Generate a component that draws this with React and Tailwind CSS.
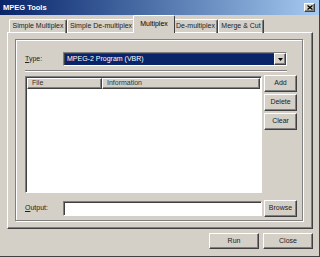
import React from 'react';

const raised =
  'border border-t-white border-l-white border-r-[#404040] border-b-[#404040] shadow-[inset_-1px_-1px_0_#808080] bg-[#d4d0c8]';
const sunken =
  'border border-t-[#808080] border-l-[#808080] border-r-white border-b-white shadow-[inset_1px_1px_0_#404040]';

function Btn({ children, className = '' }) {
  return (
    <div className={`${raised} flex items-center justify-center text-[7px] text-[#222] ${className}`}>
      {children}
    </div>
  );
}

const tabs = [
  { label: 'Simple Multiplex', w: 'w-[58px]' },
  { label: 'Simple De-multiplex', w: 'w-[68px]' },
  { label: 'Multiplex', w: 'w-[42px]', active: true },
  { label: 'De-multiplex', w: 'w-[45px]' },
  { label: 'Merge & Cut', w: 'w-[46px]' },
];

export default function App() {
  return (
    <div
      className="w-[320px] h-[257px] bg-[#d4d0c8] border-r border-b border-r-[#404040] border-b-[#404040] flex flex-col overflow-hidden text-black"
      style={{ fontFamily: '"Liberation Sans", Arial, sans-serif' }}
    >
      {/* title bar */}
      <div className="h-[15px] flex items-center justify-between px-[3px] bg-gradient-to-r from-[#0a246a] to-[#a6caf0]">
        <span className="text-white font-bold text-[7.5px] leading-none">MPEG Tools</span>
        <div className={`${raised} w-[11px] h-[9px] flex items-center justify-center mr-[1px]`}>
          <svg width="6" height="5" viewBox="0 0 6 5">
            <path d="M0.5 0.5 L5.5 4.5 M5.5 0.5 L0.5 4.5" stroke="#000" strokeWidth="1.3" />
          </svg>
        </div>
      </div>

      {/* tabs */}
      <div className="flex items-end h-[18px] pl-[9px] relative z-10 -mb-[1px]">
        {tabs.map((t) =>
          t.active ? (
            <div
              key={t.label}
              className={`${t.w} -mx-[2px] h-[18px] bg-[#d4d0c8] border-t border-l border-r border-t-white border-l-white border-r-[#404040] rounded-t-[2px] flex items-start justify-center pt-[3px] text-[7px] relative z-10`}
            >
              {t.label}
            </div>
          ) : (
            <div
              key={t.label}
              className={`${t.w} h-[14px] border-t border-l border-r border-t-white border-l-white border-r-[#404040] shadow-[inset_-1px_0_0_#808080] rounded-t-[2px] flex items-center justify-center text-[7px] text-[#222]`}
            >
              {t.label}
            </div>
          )
        )}
      </div>

      {/* tab panel */}
      <div className={`${raised} ml-[7px] w-[306px] h-[197px] pt-[6px] pl-[7px]`}>
        <div className="w-[288px] h-[182px] border border-[#808080] shadow-[inset_1px_1px_0_#fff,1px_1px_0_#fff] pl-[9px] pt-[12px] flex flex-col">
          {/* type row */}
          <div className="flex items-center h-[14px]">
            <span className="w-[38px] text-[7px] text-[#222]">
              <span className="underline">T</span>ype:
            </span>
            <div className={`${sunken} w-[224px] h-[14px] bg-[#0a246a] flex items-center justify-between`}>
              <span className="text-white text-[7px] pl-[3px]">MPEG-2 Program (VBR)</span>
              <div className={`${raised} w-[12px] h-full flex items-center justify-center`}>
                <svg width="5" height="3" viewBox="0 0 5 3">
                  <path d="M0 0 H5 L2.5 3 Z" fill="#000" />
                </svg>
              </div>
            </div>
          </div>

          {/* separator */}
          <div className="w-[262px] h-[2px] mt-[4px] border-t border-t-[#808080] border-b border-b-white" />

          {/* list + buttons */}
          <div className="flex mt-[4px] gap-[2px]">
            <div className={`${sunken} w-[237px] h-[117px] bg-white flex flex-col p-[1px]`}>
              <div className="flex h-[11px] text-[7px] text-[#333]">
                <div className={`${raised} w-[75px] h-full flex items-center pl-[4px]`}>File</div>
                <div className={`${raised} flex-1 h-full flex items-center pl-[4px]`}>Information</div>
              </div>
            </div>
            <div className="flex flex-col gap-[2px] -mt-[1px]">
              <Btn className="w-[33px] h-[17px]">Add</Btn>
              <Btn className="w-[33px] h-[17px]">Delete</Btn>
              <Btn className="w-[33px] h-[17px]">Clear</Btn>
            </div>
          </div>

          {/* output row */}
          <div className="flex items-center mt-[7px] gap-[2px]">
            <span className="w-[36px] text-[7px] text-[#222]">
              <span className="underline">O</span>utput:
            </span>
            <div className={`${sunken} w-[199px] h-[15px] bg-white`} />
            <Btn className="w-[33px] h-[17px]">Browse</Btn>
          </div>
        </div>
      </div>

      {/* bottom buttons */}
      <div className="flex justify-end gap-[4px] mt-[4px] pr-[6px]">
        <Btn className="w-[50px] h-[16px]">Run</Btn>
        <Btn className="w-[50px] h-[16px]">Close</Btn>
      </div>
    </div>
  );
}
